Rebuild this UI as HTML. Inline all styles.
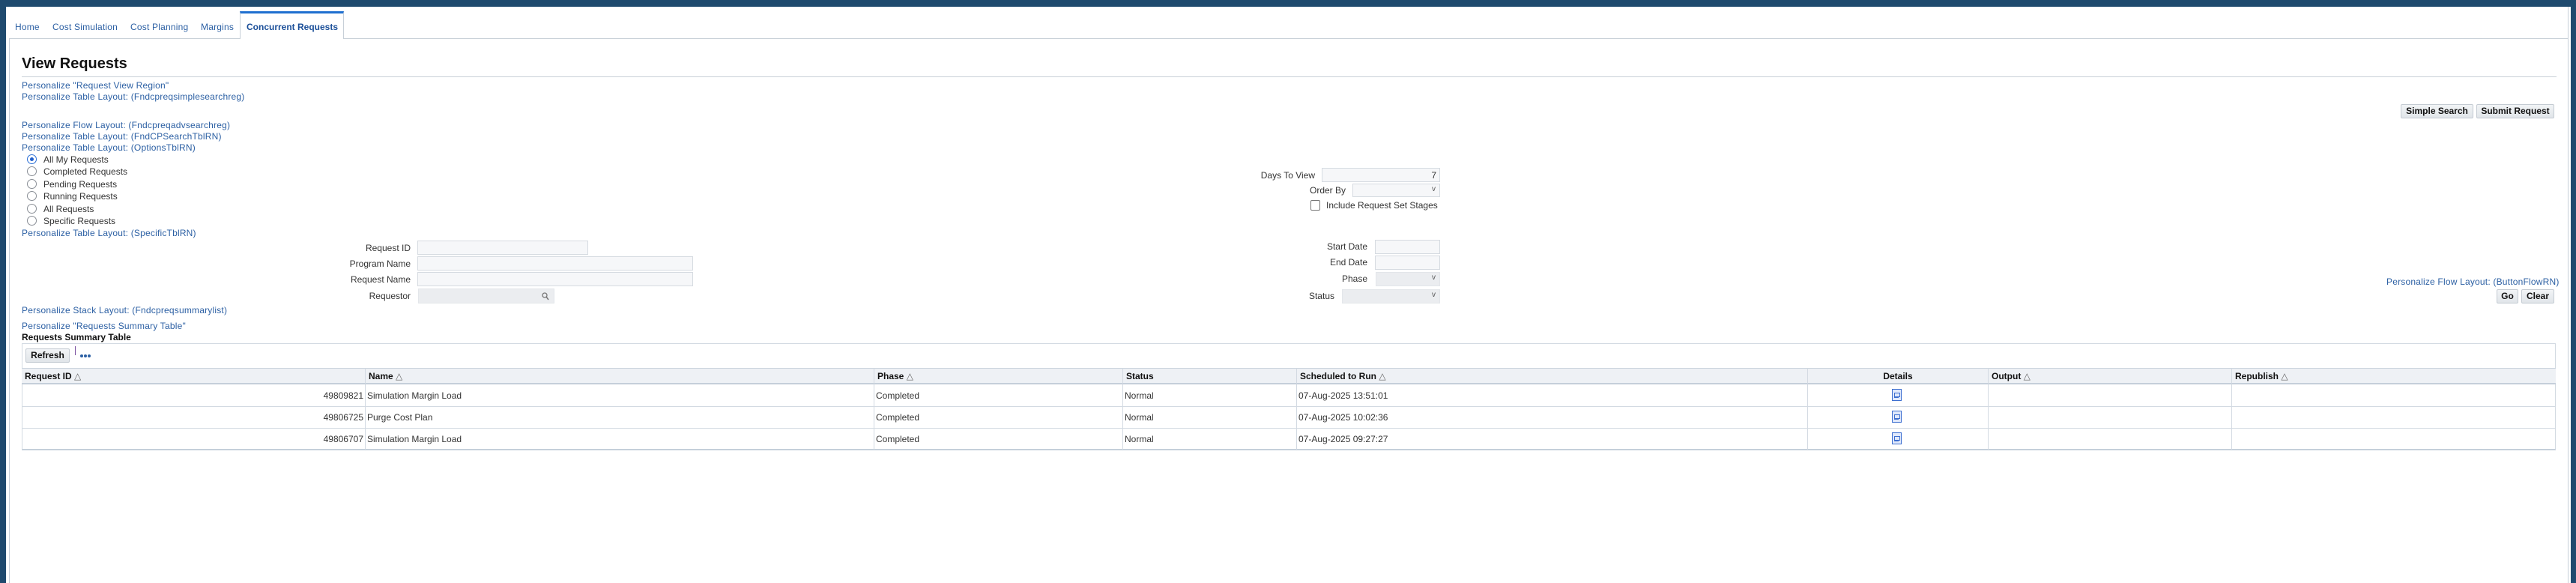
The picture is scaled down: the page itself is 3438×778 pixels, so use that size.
<!DOCTYPE html>
<html><head><meta charset="utf-8"><style>
*{margin:0;padding:0;box-sizing:border-box}
body{width:3438px;height:778px;background:#1f4a6e;position:relative;overflow:hidden;font-family:"Liberation Sans",Arial,sans-serif;font-size:12px;color:#333}
.a{position:absolute;white-space:nowrap;line-height:14px}
.lk{color:#2b5fa3;letter-spacing:0.2px}
.r{text-align:right}
.in{position:absolute;background:#f6f7f9;border:1px solid #d6dbe1}
.gr{background:#ebedf0;border-color:#e3e6ea}
.btn{position:absolute;background:linear-gradient(#f2f4f6,#e1e5e9);border:1px solid #c3cad2;border-radius:2px;font-weight:bold;color:#111;text-align:center;font-size:12px;line-height:17px}
.car{position:absolute;right:5px;top:1px;font-size:10px;color:#555}
.radio{position:absolute;width:13px;height:13px;border:1.5px solid #8a8f96;border-radius:50%;background:#fff}
.hd{position:absolute;top:491px;height:22px;background:#eef1f5;border-top:1px solid #cbd4de;border-bottom:2px solid #c5cfda;font-weight:bold;color:#111;line-height:20px;padding-left:4px}
.vl{position:absolute;width:1px;background:#d3dae2}
.hl{position:absolute;height:1px;background:#d3dae2}
.ic{position:absolute;width:13px;height:16px;border:1.5px solid #3d6fd0;background:#dfe8fb}
.ic:before{content:"";position:absolute;left:2px;top:4px;width:6px;height:4px;border:1px solid #3d6fd0}
.ic:after{content:"";position:absolute;left:2px;top:10px;width:6px;height:1px;background:#3d6fd0}
.dot{position:absolute;width:4px;height:4px;border-radius:50%;background:#2b5fa3;top:473px}
</style></head><body>
<div style="position:absolute;left:8px;top:9px;width:3423px;height:769px;background:#fff"></div>
<div style="position:absolute;left:3427px;top:9px;width:1px;height:769px;background:#c8d0d8"></div>
<div style="position:absolute;left:12px;top:51px;width:3415px;height:1px;background:#c8d0d8"></div>
<div style="position:absolute;left:12px;top:51px;width:1px;height:727px;background:#c8d0d8"></div>
<div class="a lk" style="left:20px;top:29px">Home</div>
<div class="a lk" style="left:70px;top:29px">Cost Simulation</div>
<div class="a lk" style="left:174px;top:29px">Cost Planning</div>
<div class="a lk" style="left:268px;top:29px">Margins</div>
<div style="position:absolute;left:320px;top:15px;width:139px;height:37px;background:#fff;border:1px solid #c8d0d8;border-top:3px solid #1f6fd0;border-bottom:none"></div>
<div class="a" style="left:329px;top:29px;color:#1b4f99;font-weight:bold">Concurrent Requests</div>
<div class="a" style="left:29px;top:73px;font-size:20px;line-height:24px;font-weight:bold;color:#111">View Requests</div>
<div style="position:absolute;left:29px;top:102px;width:3383px;height:1px;background:#c8d0d8"></div>
<div class="a lk" style="left:29px;top:107px">Personalize "Request View Region"</div>
<div class="a lk" style="left:29px;top:122px">Personalize Table Layout: (Fndcpreqsimplesearchreg)</div>
<div class="a lk" style="left:29px;top:160px">Personalize Flow Layout: (Fndcpreqadvsearchreg)</div>
<div class="a lk" style="left:29px;top:175px">Personalize Table Layout: (FndCPSearchTblRN)</div>
<div class="a lk" style="left:29px;top:190px">Personalize Table Layout: (OptionsTblRN)</div>
<div class="radio" style="left:36px;top:206px;border-color:#2b6fd6"><div style="position:absolute;left:2.5px;top:2.5px;width:5px;height:5px;border-radius:50%;background:#1f5fcc"></div></div>
<div class="a" style="left:58px;top:206px">All My Requests</div>
<div class="radio" style="left:36px;top:222px"></div><div class="a" style="left:58px;top:222px">Completed Requests</div>
<div class="radio" style="left:36px;top:239px"></div><div class="a" style="left:58px;top:239px">Pending Requests</div>
<div class="radio" style="left:36px;top:255px"></div><div class="a" style="left:58px;top:255px">Running Requests</div>
<div class="radio" style="left:36px;top:272px"></div><div class="a" style="left:58px;top:272px">All Requests</div>
<div class="radio" style="left:36px;top:288px"></div><div class="a" style="left:58px;top:288px">Specific Requests</div>
<div class="a lk" style="left:29px;top:304px">Personalize Table Layout: (SpecificTblRN)</div>
<div class="btn" style="left:3204px;top:139px;width:97px;height:19px">Simple Search</div>
<div class="btn" style="left:3305px;top:139px;width:104px;height:19px">Submit Request</div>
<div class="a r" style="left:1600px;width:155px;top:227px">Days To View</div>
<div class="in" style="left:1764px;top:224px;width:158px;height:19px"><span style="position:absolute;right:4px;top:2px">7</span></div>
<div class="a r" style="left:1600px;width:196px;top:247px">Order By</div>
<div class="in" style="left:1805px;top:245px;width:117px;height:18px"><span class="car">v</span></div>
<div style="position:absolute;left:1749px;top:267px;width:13px;height:14px;border:1.5px solid #777;border-radius:2px;background:#fff"></div>
<div class="a" style="left:1770px;top:267px">Include Request Set Stages</div>
<div class="a r" style="left:300px;width:248px;top:324px">Request ID</div>
<div class="in" style="left:557px;top:321px;width:228px;height:19px"></div>
<div class="a r" style="left:300px;width:248px;top:345px">Program Name</div>
<div class="in" style="left:557px;top:342px;width:368px;height:19px"></div>
<div class="a r" style="left:300px;width:248px;top:366px">Request Name</div>
<div class="in" style="left:557px;top:363px;width:368px;height:19px"></div>
<div class="a r" style="left:300px;width:248px;top:388px">Requestor</div>
<div class="in gr" style="left:558px;top:385px;width:182px;height:20px"><svg style="position:absolute;right:6px;top:4px" width="10" height="11" viewBox="0 0 10 11"><circle cx="4" cy="4" r="3" fill="none" stroke="#777" stroke-width="1.3"/><path d="M6 6 L9 10" stroke="#777" stroke-width="1.5"/></svg></div>
<div class="a r" style="left:1700px;width:125px;top:322px">Start Date</div>
<div class="in" style="left:1835px;top:320px;width:87px;height:19px"></div>
<div class="a r" style="left:1700px;width:125px;top:343px">End Date</div>
<div class="in" style="left:1835px;top:341px;width:87px;height:19px"></div>
<div class="a r" style="left:1700px;width:125px;top:365px">Phase</div>
<div class="in gr" style="left:1836px;top:363px;width:86px;height:19px"><span class="car">v</span></div>
<div class="a r" style="left:1700px;width:81px;top:388px">Status</div>
<div class="in gr" style="left:1791px;top:386px;width:131px;height:19px"><span class="car">v</span></div>
<div class="a lk" style="left:3185px;top:369px">Personalize Flow Layout: (ButtonFlowRN)</div>
<div class="btn" style="left:3332px;top:386px;width:29px;height:19px">Go</div>
<div class="btn" style="left:3365px;top:386px;width:44px;height:19px">Clear</div>
<div class="a lk" style="left:29px;top:407px">Personalize Stack Layout: (Fndcpreqsummarylist)</div>
<div class="a lk" style="left:29px;top:428px">Personalize "Requests Summary Table"</div>
<div class="a" style="left:29px;top:443px;font-weight:bold;color:#111">Requests Summary Table</div>
<div style="position:absolute;left:29px;top:458px;width:3382px;height:143px;border:1px solid #d3dae2;border-bottom:2px solid #c5cfda"></div>
<div class="btn" style="left:34px;top:465px;width:59px;height:19px">Refresh</div>
<div style="position:absolute;left:100px;top:462px;width:1px;height:12px;background:#7a4fa0"></div>
<div class="dot" style="left:107px"></div><div class="dot" style="left:112px"></div><div class="dot" style="left:117px"></div>
<div class="hd" style="left:29px;width:458px">Request ID <span style="font-weight:normal;color:#666">&#9651;</span></div>
<div class="hd" style="left:487px;width:679px;border-left:1px solid #d3dae2">Name <span style="font-weight:normal;color:#666">&#9651;</span></div>
<div class="hd" style="left:1166px;width:332px;border-left:1px solid #d3dae2">Phase <span style="font-weight:normal;color:#666">&#9651;</span></div>
<div class="hd" style="left:1498px;width:232px;border-left:1px solid #d3dae2">Status</div>
<div class="hd" style="left:1730px;width:682px;border-left:1px solid #d3dae2">Scheduled to Run <span style="font-weight:normal;color:#666">&#9651;</span></div>
<div class="hd" style="left:2412px;width:241px;border-left:1px solid #d3dae2;text-align:center;padding:0">Details</div>
<div class="hd" style="left:2653px;width:325px;border-left:1px solid #d3dae2">Output <span style="font-weight:normal;color:#666">&#9651;</span></div>
<div class="hd" style="left:2978px;width:433px;border-left:1px solid #d3dae2">Republish <span style="font-weight:normal;color:#666">&#9651;</span></div>
<div class="hl" style="left:29px;top:542px;width:3382px"></div>
<div class="hl" style="left:29px;top:571px;width:3382px"></div>
<div class="vl" style="left:487px;top:513px;height:87px"></div>
<div class="vl" style="left:1166px;top:513px;height:87px"></div>
<div class="vl" style="left:1498px;top:513px;height:87px"></div>
<div class="vl" style="left:1730px;top:513px;height:87px"></div>
<div class="vl" style="left:2412px;top:513px;height:87px"></div>
<div class="vl" style="left:2653px;top:513px;height:87px"></div>
<div class="vl" style="left:2978px;top:513px;height:87px"></div>
<div class="a r" style="left:300px;width:185px;top:521px">49809821</div>
<div class="a" style="left:490px;top:521px">Simulation Margin Load</div>
<div class="a" style="left:1169px;top:521px">Completed</div>
<div class="a" style="left:1501px;top:521px">Normal</div>
<div class="a" style="left:1733px;top:521px">07-Aug-2025 13:51:01</div>
<div class="ic" style="left:2525px;top:519px"></div>
<div class="a r" style="left:300px;width:185px;top:550px">49806725</div>
<div class="a" style="left:490px;top:550px">Purge Cost Plan</div>
<div class="a" style="left:1169px;top:550px">Completed</div>
<div class="a" style="left:1501px;top:550px">Normal</div>
<div class="a" style="left:1733px;top:550px">07-Aug-2025 10:02:36</div>
<div class="ic" style="left:2525px;top:548px"></div>
<div class="a r" style="left:300px;width:185px;top:579px">49806707</div>
<div class="a" style="left:490px;top:579px">Simulation Margin Load</div>
<div class="a" style="left:1169px;top:579px">Completed</div>
<div class="a" style="left:1501px;top:579px">Normal</div>
<div class="a" style="left:1733px;top:579px">07-Aug-2025 09:27:27</div>
<div class="ic" style="left:2525px;top:577px"></div>
</body></html>
